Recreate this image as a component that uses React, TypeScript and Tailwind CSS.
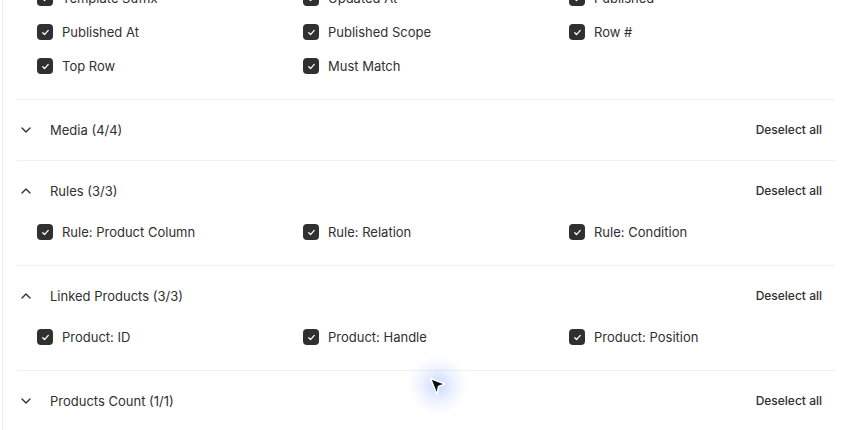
import React, { useState } from 'react';
import { ChevronDown, ChevronUp } from 'lucide-react';

interface Section {
    id: string;
    title: string;
    open: boolean;
    fields: string[];
}

const initialSections: Section[] = [
    {
        id: 'general',
        title: 'General',
        open: true,
        fields: [
            'Template Suffix',
            'Updated At',
            'Published',
            'Published At',
            'Published Scope',
            'Row #',
            'Top Row',
            'Must Match',
        ],
    },
    { id: 'media', title: 'Media (4/4)', open: false, fields: ['Image Src', 'Image Alt', 'Image Width', 'Image Height'] },
    { id: 'rules', title: 'Rules (3/3)', open: true, fields: ['Rule: Product Column', 'Rule: Relation', 'Rule: Condition'] },
    { id: 'linked', title: 'Linked Products (3/3)', open: true, fields: ['Product: ID', 'Product: Handle', 'Product: Position'] },
    { id: 'count', title: 'Products Count (1/1)', open: false, fields: ['Products Count'] },
];

const CheckBox = ({ checked }: { checked: boolean }) => (
    <span
        className={`w-4 h-4 rounded-[4px] flex items-center justify-center flex-shrink-0 ${checked ? 'bg-[#303030]' : 'border border-[#8a8a8a] bg-white'
            }`}
    >
        {checked && (
            <svg viewBox="0 0 16 16" className="w-[11px] h-[11px]" fill="none">
                <path d="M4 8.4 6.6 11 12 5" stroke="white" strokeWidth="1.9" strokeLinecap="round" strokeLinejoin="round" />
            </svg>
        )}
    </span>
);

const FieldSection = ({ section, first, onToggle }: { section: Section; first: boolean; onToggle: () => void }) => {
    return (
        <div className={`border-b border-[#f0f0f0] ${first ? 'pb-4' : 'py-4'}`}>
            {!first && (
                <div className="h-7 flex items-center justify-between">
                    <button onClick={onToggle} className="flex items-center gap-[16px] pl-[1px] text-[#303030]">
                        {section.open ? (
                            <ChevronUp className="w-4 h-4" strokeWidth={2} />
                        ) : (
                            <ChevronDown className="w-4 h-4" strokeWidth={2} />
                        )}
                        <span className="text-[13px] leading-5">{section.title}</span>
                    </button>
                    <button className="px-[13px] text-xs font-medium text-[#303030] leading-5">Deselect all</button>
                </div>
            )}
            {section.open && (
                <div className={`grid grid-cols-3 auto-rows-[34px] pl-[20px] ${first ? '-mt-[19px]' : 'mt-[10px]'}`}>
                    {section.fields.map((f) => (
                        <label key={f} className="flex items-center gap-[9px] text-[13px] text-[#303030]">
                            <CheckBox checked={true} />
                            <span className="leading-5">{f}</span>
                        </label>
                    ))}
                </div>
            )}
        </div>
    );
};

const App = () => {
    const [sections, setSections] = useState<Section[]>(initialSections);

    const toggle = (id: string) => {
        setSections((prev) => prev.map((s) => (s.id === id ? { ...s, open: !s.open } : s)));
    };

    return (
        <div
            className="relative w-[848px] h-[430px] overflow-hidden bg-white"
            style={{ fontFamily: 'Inter, "Liberation Sans", sans-serif' }}
        >
            <div className="absolute left-[2px] top-0 bottom-0 w-px bg-[#ebebeb]" />
            <div className="flow-root pl-[17px] pr-[13px]">
                {sections.map((s, i) => (
                    <FieldSection key={s.id} section={s} first={i === 0} onToggle={() => toggle(s.id)} />
                ))}
            </div>

            {/* pointer */}
            <div className="absolute left-[408px] top-[355px] w-[60px] h-[60px] rounded-full bg-[radial-gradient(circle,rgba(90,135,255,0.32)_0%,rgba(130,165,255,0.14)_38%,rgba(255,255,255,0)_70%)]" />
            <svg className="absolute left-[428px] top-[376px]" width="20" height="22" viewBox="0 0 20 22">
                <path d="M2.5 2.5 L17 8 L10.5 10.5 L9 18.5 Z" fill="#0d0d0d" stroke="white" strokeWidth="1.5" strokeLinejoin="round" />
            </svg>
        </div>
    );
};

export default App;
